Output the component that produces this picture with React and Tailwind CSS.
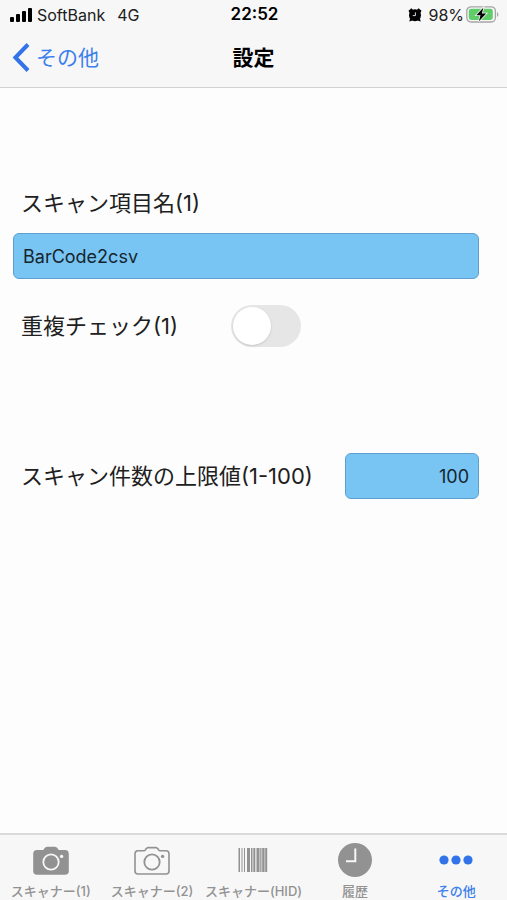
import { useState } from "react";

function SignalIcon() {
  return (
    <svg width="23" height="14" viewBox="0 0 23 14" aria-hidden="true">
      <rect x="0" y="9" width="4" height="5" rx="1" />
      <rect x="6" y="6" width="4" height="8" rx="1" />
      <rect x="12" y="3" width="4" height="11" rx="1" />
      <rect x="18" y="0" width="4" height="14" rx="1" />
    </svg>
  );
}

function AlarmIcon() {
  return (
    <svg width="14" height="14" viewBox="0 0 14 14" aria-hidden="true">
      <path d="M0.5 2.8 3.4 0.3 5 1.8 1.6 5ZM13.5 2.8 10.6 0.3 9 1.8 12.4 5Z" />
      <path d="M2.2 10.5 1.2 13.5 4.6 12.6ZM11.8 10.5 12.8 13.5 9.4 12.6Z" />
      <circle cx="7" cy="7.2" r="6" />
      <path d="M7.4 4.4V7.6H4.8" fill="none" stroke="#f7f7f7" strokeWidth="0.9" />
    </svg>
  );
}

function BatteryIcon() {
  return (
    <svg width="33" height="17" viewBox="0 0 33 17" aria-hidden="true">
      <rect x="0.8" y="0.8" width="28.6" height="15.2" rx="4.2" fill="#f7f7f7" stroke="#a5a5a5" strokeWidth="1.3" />
      <rect x="2.8" y="2.8" width="24" height="11.2" rx="2.4" fill="#5fce68" />
      <path d="M31 6v5c1.8-.7 1.8-4.3 0-5Z" fill="#a5a5a5" />
      <path d="M17.3 1.8 10.3 9.3h4.2l-1.6 5.9 7.3-7.7h-4.3Z" stroke="#f7f7f7" strokeWidth="1.6" paintOrder="stroke" />
    </svg>
  );
}

function CameraIcon({ filled }) {
  const line = filled ? "#f7f7f7" : "#929292";
  return (
    <svg width="36" height="29" viewBox="0 0 36 29" fill="none" aria-hidden="true">
      <path
        d="M4 4.8h5.6c.8 0 1.4-.3 1.8-1l.7-1c.5-.8 1-1.2 2-1.2h7.8c1 0 1.5.4 2 1.2l.7 1c.4.7 1 1 1.8 1H32a3 3 0 0 1 3 3V25a3 3 0 0 1-3 3H4a3 3 0 0 1-3-3V7.8a3 3 0 0 1 3-3Z"
        fill={filled ? "#929292" : "none"}
        stroke="#929292"
        strokeWidth="1.6"
      />
      <circle cx="18" cy="16" r="7.7" stroke={line} strokeWidth="1.8" />
      <circle cx="28.6" cy="10.4" r="1.7" fill={line} />
    </svg>
  );
}

function BarcodeIcon() {
  return (
    <svg width="30" height="24" viewBox="0 0 30 24" fill="#929292" aria-hidden="true">
      <rect x="0.5" width="1.5" height="24" />
      <rect x="3.5" width="1" height="24" />
      <rect x="6" width="1" height="24" />
      <rect x="9" width="3" height="24" />
      <rect x="13" width="1.5" height="24" />
      <rect x="15.3" width="2" height="24" />
      <rect x="18.5" width="3" height="24" />
      <rect x="22.2" width="1.3" height="24" />
      <rect x="24.2" width="2.4" height="24" />
      <rect x="27.2" width="2" height="24" />
    </svg>
  );
}

function ClockIcon() {
  return (
    <svg width="36" height="36" viewBox="0 0 36 36" fill="none" aria-hidden="true">
      <circle cx="18" cy="18" r="17" fill="#929292" />
      <path d="M18.3 6.5V19.3H9" stroke="#f7f7f7" strokeWidth="2" />
    </svg>
  );
}

function MoreIcon() {
  return (
    <svg width="34" height="10" viewBox="0 0 34 10" fill="#3273ea" aria-hidden="true">
      <circle cx="5" cy="5" r="4.6" />
      <circle cx="17" cy="5" r="4.6" />
      <circle cx="29" cy="5" r="4.6" />
    </svg>
  );
}

const tabs = [
  { id: "scanner1", label: "スキャナー(1)", icon: <CameraIcon filled /> },
  { id: "scanner2", label: "スキャナー(2)", icon: <CameraIcon /> },
  { id: "hid", label: "スキャナー(HID)", icon: <BarcodeIcon /> },
  { id: "history", label: "履歴", icon: <ClockIcon /> },
  { id: "more", label: "その他", icon: <MoreIcon /> },
];

const fieldClass =
  "h-[46px] rounded-md border border-[#5f9fd0] bg-[#78c5f3] px-[9px] text-lg text-[#16242e] outline-none";

export default function App() {
  // state
  const [itemName, setItemName] = useState("BarCode2csv");
  const [checkDuplicates, setCheckDuplicates] = useState(false);
  const [limit, setLimit] = useState("100");

  return (
    <div className="flex min-h-screen flex-col bg-[#fdfdfd] font-[Inter,'Noto_Sans_CJK_JP',sans-serif] text-[#202020]">
      <header className="border-b border-[#d2d2d2] bg-[#f7f7f7]">
        <div className="grid h-7 grid-cols-3 items-center pt-px pr-2 pl-2.5 text-base">
          <div className="flex items-center gap-1 whitespace-nowrap">
            <SignalIcon />
            <span>SoftBank</span>
            <span className="pl-2">4G</span>
          </div>
          <span className="text-center text-[17px] font-semibold text-black">22:52</span>
          <div className="flex items-center justify-end gap-0.5">
            <AlarmIcon />
            <span className="pl-1">98%</span>
            <BatteryIcon />
          </div>
        </div>
        <div className="grid h-[59px] grid-cols-3 items-center px-3">
          <a href="#more" className="flex items-center gap-1.5 text-[21px] text-[#3c80ee]">
            <svg width="18" height="29" viewBox="0 0 18 29" fill="none" aria-hidden="true">
              <path d="M16 1.5 3.4 14.5 16 27.5" stroke="#3273ea" strokeWidth="4" />
            </svg>
            その他
          </a>
          <h1 className="text-center text-[21px] font-bold text-black">設定</h1>
        </div>
      </header>

      <main className="flex-1 pt-[97px] pr-7 pl-[13px] text-[22px]">
        <label htmlFor="item-name" className="block pl-2 leading-9">
          スキャン項目名(1)
        </label>
        <input
          id="item-name"
          type="text"
          className={`${fieldClass} mt-3 block w-full`}
          value={itemName}
          onChange={(e) => setItemName(e.target.value)}
        />

        <div className="mt-[26px] flex items-center pl-2">
          <label htmlFor="duplicates" className="w-[210px]">
            重複チェック(1)
          </label>
          <input
            id="duplicates"
            type="checkbox"
            role="switch"
            className="h-[42px] w-[70px] cursor-pointer appearance-none rounded-full bg-[#e6e6e6] p-0.5 before:block before:size-[38px] before:rounded-full before:bg-white before:shadow-sm before:transition-transform checked:bg-green-500 checked:before:translate-x-7"
            checked={checkDuplicates}
            onChange={(e) => setCheckDuplicates(e.target.checked)}
          />
        </div>

        <div className="mt-[106px] flex items-center justify-between pl-2">
          <label htmlFor="limit">スキャン件数の上限値(1-100)</label>
          <input
            id="limit"
            type="text"
            inputMode="numeric"
            className={`${fieldClass} w-[134px] text-right`}
            value={limit}
            onChange={(e) => setLimit(e.target.value)}
          />
        </div>
      </main>

      <nav className="grid grid-cols-5 border-t-2 border-[#dadada] bg-[#f7f7f7] pb-px">
        {tabs.map((tab) => (
          <a
            key={tab.id}
            href={`#${tab.id}`}
            className={`flex flex-col items-center text-[13px] leading-4 font-medium whitespace-nowrap ${
              tab.id === "more" ? "text-[#3c80ee]" : "text-[#929292]"
            }`}
          >
            <span className="flex h-12 items-center pt-0.5">{tab.icon}</span>
            {tab.label}
          </a>
        ))}
      </nav>
    </div>
  );
}
